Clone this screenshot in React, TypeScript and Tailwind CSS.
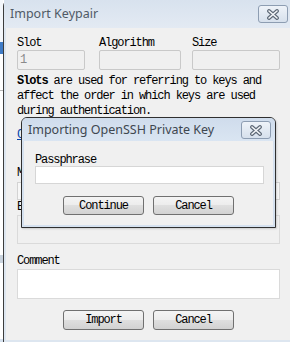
import React from "react";

function CloseButton() {
  return (
    <div className="w-[30px] h-[18px] rounded-[3px] border border-[#8d9db2] bg-[linear-gradient(#eef3f9,#d6e0ec)] flex items-center justify-center">
      <svg width="14" height="11" viewBox="0 0 14 11">
        <path d="M3 2 L11 9 M11 2 L3 9" stroke="#5d6876" strokeWidth="3.8" strokeLinecap="round" fill="none" />
        <path d="M3 2 L11 9 M11 2 L3 9" stroke="#f4f6f9" strokeWidth="1.6" strokeLinecap="round" fill="none" />
      </svg>
    </div>
  );
}

function Btn({ label }: { label: string }) {
  return (
    <div className="w-[81px] h-full rounded-[3px] border border-[#707070] bg-[linear-gradient(#f4f4f4_0%,#ececec_50%,#dfdfdf_50%,#d2d2d2_100%)] flex items-center justify-center font-['Liberation_Mono',monospace] text-[12px] tracking-[-1.1px] text-black">
      {label}
    </div>
  );
}

export default function App() {
  return (
    <div className="w-[290px] h-[342px] flex bg-white overflow-hidden relative font-['Liberation_Mono',monospace]">
      {/* background strip of another window */}
      <div className="w-[3px] shrink-0 flex flex-col bg-white">
        <div className="h-[42px] bg-[#f4f7fb]" />
        <div className="h-[12px] bg-[#3f7bc6]" />
        <div className="h-[36px]" />
        <div className="h-[1px] bg-[#b8b8b8]" />
        <div className="h-[164px]" />
        <div className="h-[8px] bg-[#c9d3de]" />
        <div className="flex-1" />
        <div className="h-[3px] bg-[#d6e2ef]" />
      </div>

      {/* main window */}
      <div className="flex-1 flex flex-col border-l border-[#3c3c3c] rounded-tl-[6px] bg-[#dde6f0]">
        <div className="h-[28px] shrink-0 flex items-start justify-between pr-[2px] bg-[linear-gradient(#d8e2ee,#e3eaf3)]">
          <div className="pl-[6px] pt-[6px] font-['Noto_Sans',sans-serif] text-[12.5px] leading-[16px] text-[#505a66]">
            Import Keypair
          </div>
          <div className="pt-[5px]">
            <CloseButton />
          </div>
        </div>

        <div className="flex-1 ml-[2px] mb-[2px] bg-[#f0f0f0] pl-[11px] pr-[10px] pt-[9px] flex flex-col text-[12px] tracking-[-1.1px] text-black">
          <div className="flex">
            <div className="w-[68px] flex flex-col">
              <div className="leading-[12px] h-[12px]">Slot</div>
              <div className="mt-[1px] h-[20px] border border-[#c9c9c9] rounded-[2px] bg-[#f0f0f0] text-[#8a8a8a] pl-[2px] leading-[18px]">1</div>
            </div>
            <div className="w-[82px] ml-[14px] flex flex-col">
              <div className="leading-[12px] h-[12px]">Algorithm</div>
              <div className="mt-[1px] h-[20px] border border-[#c9c9c9] rounded-[2px] bg-[#f0f0f0]" />
            </div>
            <div className="w-[88px] ml-[11px] flex flex-col">
              <div className="leading-[12px] h-[12px]">Size</div>
              <div className="mt-[1px] h-[20px] border border-[#c9c9c9] rounded-[2px] bg-[#f0f0f0]" />
            </div>
          </div>

          <p className="mt-[4px] leading-[15px]">
            <b>Slots</b> are used for referring to keys and affect the order in which keys are used during authentication.
          </p>

          <div className="mt-[10px] leading-[13px] text-[#0645ad] underline">Change slot</div>

          <div className="mt-[25px] leading-[12px] h-[12px]">Modulus</div>
          <div className="mt-[3px] h-[18px] border border-[#d3d3d3] bg-[#f7f7f7]" />
          <div className="mt-[1px] leading-[12px] h-[12px]">Exponent</div>
          <div className="mt-[2px] h-[29px] border border-[#dadada] bg-[#f0f0f0]" />

          <div className="mt-[11px] leading-[12px] h-[12px]">Comment</div>
          <div className="mt-[2px] h-[30px] border border-[#dadada] bg-white" />

          <div className="mt-[11px] h-[20px] flex justify-center gap-[9px]">
            <Btn label="Import" />
            <Btn label="Cancel" />
          </div>
        </div>
      </div>

      {/* modal dialog */}
      <div className="absolute left-[21px] top-[117px] w-[255px] h-[111px] border border-[#2f2f2f] rounded-t-[6px] bg-[#d5e1ef] flex flex-col shadow-[1px_1px_2px_rgba(0,0,0,0.15)]">
        <div className="h-[23px] shrink-0 flex items-start justify-between pr-[4px] rounded-t-[5px] bg-[linear-gradient(#cfdcec,#dae5f2)]">
          <div className="pl-[6px] pt-[4px] font-['Noto_Sans',sans-serif] text-[12.5px] leading-[16px] text-[#3e4750]">
            Importing OpenSSH Private Key
          </div>
          <div className="pt-[3px]">
            <CloseButton />
          </div>
        </div>
        <div className="flex-1 mx-[2px] mb-[2px] bg-[#f0f0f0] pl-[11px] pt-[14px] flex flex-col text-[12px] tracking-[-1.1px] text-black">
          <div className="leading-[11px] h-[11px]">Passphrase</div>
          <div className="w-[229px] h-[18px] border border-[#d6d6d6] bg-white" />
          <div className="mt-[12px] h-[19px] flex justify-center gap-[9px] -ml-[11px]">
            <Btn label="Continue" />
            <Btn label="Cancel" />
          </div>
        </div>
      </div>
    </div>
  );
}
